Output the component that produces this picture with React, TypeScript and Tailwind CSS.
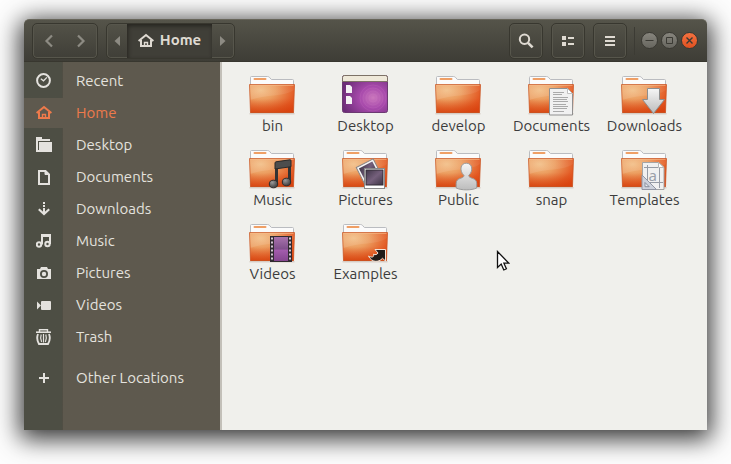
import type { ReactNode } from "react";

const FONT = "font-['Ubuntu','Noto_Sans',sans-serif]";

type SvgProps = { className?: string };

function HomeIcon({ className }: SvgProps) {
  return (
    <svg className={className} width="16" height="16" viewBox="0 0 16 16" fill="none" stroke="currentColor" strokeWidth="2">
      <path d="M.6 8 8 2l7.4 6" />
      <path d="M3 7v6h10V7" />
      <path d="M6.5 13V9.500h3V13" strokeWidth="1.4" />
    </svg>
  );
}

function RecentIcon() {
  return (
    <svg width="16" height="16" viewBox="0 0 16 16" fill="none" stroke="currentColor">
      <circle cx="7.5" cy="7.5" r="6.4" strokeWidth="2" />
      <path d="m4.8 5.8 2.7 2 3.4-3.4" strokeWidth="1.3" />
    </svg>
  );
}

function DesktopIcon() {
  return (
    <svg width="16" height="16" viewBox="0 0 16 16" fill="currentColor">
      <path d="M0 0h6v2h8v2H2v11H0z" />
      <path d="M3 5h13v10H3z" />
      <path d="M0 13h16v2H0z" />
    </svg>
  );
}

function DocumentIcon() {
  return (
    <svg width="16" height="16" viewBox="0 0 16 16" fill="none" stroke="currentColor" strokeWidth="2">
      <path d="M3 2h6.5L13 5.500V15H3z" />
      <path d="M9 1.500v4h4z" fill="currentColor" strokeWidth="1" />
    </svg>
  );
}

function DownloadIcon() {
  return (
    <svg width="16" height="16" viewBox="0 0 16 16" fill="currentColor">
      <path d="M7 1h2v2H7zM7 4h2v2H7zM7 7h2v5H7z" />
      <path d="m2.800 8.300 5.200 4.700 5.200-4.700" fill="none" stroke="currentColor" strokeWidth="2.200" />
    </svg>
  );
}

function MusicIcon() {
  return (
    <svg width="16" height="16" viewBox="0 0 16 16" fill="none" stroke="currentColor" strokeWidth="2">
      <circle cx="3" cy="11.500" r="2.200" />
      <circle cx="11.500" cy="11" r="2.200" />
      <path d="M6 11.500V2h8v9" />
      <path d="M6 3.500h8" strokeWidth="1" />
    </svg>
  );
}

function CameraIcon() {
  return (
    <svg width="16" height="16" viewBox="0 0 16 16" fill="currentColor">
      <path fillRule="evenodd" d="M1 4h3l1-2h6l1 2h3v10H1zM8 5a4 4 0 1 0 0 8 4 4 0 0 0 0-8z" />
      <circle cx="8" cy="9" r="2.200" />
    </svg>
  );
}

function VideoIcon() {
  return (
    <svg width="16" height="16" viewBox="0 0 16 16" fill="currentColor">
      <rect x="5" y="4" width="10" height="9" rx="1" />
      <path d="M1 4.500 5 8.500l-4 4z" />
    </svg>
  );
}

function TrashIcon() {
  return (
    <svg width="16" height="16" viewBox="0 0 16 16" fill="none" stroke="currentColor">
      <path d="M0 3.200h15" strokeWidth="1.600" />
      <path d="M3.500 3V.8h8V3" strokeWidth="1.400" />
      <path d="M2 5c-1.200 3-.8 7 1 10h9c1.800-3 2.200-7 1-10" strokeWidth="1.900" />
      <path d="M5.200 5.500c-1 2.800-.8 5 .4 7.500M9.800 5.500c1 2.800.8 5-.4 7.500M7.500 5v8.500" strokeWidth="1.200" />
    </svg>
  );
}

function PlusIcon() {
  return (
    <svg width="16" height="16" viewBox="0 0 16 16" fill="currentColor">
      <path d="M7 3h2v4h4v2H9v4H7V9H3V7h4z" />
    </svg>
  );
}

const places: { label: string; icon: ReactNode; active?: boolean }[] = [
  { label: "Recent", icon: <RecentIcon /> },
  { label: "Home", icon: <HomeIcon />, active: true },
  { label: "Desktop", icon: <DesktopIcon /> },
  { label: "Documents", icon: <DocumentIcon /> },
  { label: "Downloads", icon: <DownloadIcon /> },
  { label: "Music", icon: <MusicIcon /> },
  { label: "Pictures", icon: <CameraIcon /> },
  { label: "Videos", icon: <VideoIcon /> },
  { label: "Trash", icon: <TrashIcon /> },
];

function Place({ label, icon, active = false }: { label: string; icon: ReactNode; active?: boolean }) {
  return (
    <a
      href="#"
      aria-current={active ? "page" : undefined}
      className={`flex h-8 items-center text-[15px] ${active ? "text-[#ee7a4b]" : "text-[#e4e2de]"}`}
    >
      <span className={`flex h-[30px] w-[39px] items-center justify-center ${active ? "bg-[#5e594e]" : ""}`}>{icon}</span>
      <span className="pl-[13px]">{label}</span>
    </a>
  );
}

/* Shared gradients used by every file icon */
function Gradients() {
  return (
    <svg width="0" height="0" className="absolute" aria-hidden="true">
      <defs>
        <radialGradient id="front" cx="0.25" cy="0.2" r="0.95">
          <stop offset="0" stopColor="#f2bd84" />
          <stop offset="0.350" stopColor="#ec9e60" />
          <stop offset="0.800" stopColor="#e35a24" />
          <stop offset="1" stopColor="#df4614" />
        </radialGradient>
        <linearGradient id="shine" x1="0" y1="0" x2="1" y2="0">
          <stop offset="0" stopColor="#fff" stopOpacity="0.120" />
          <stop offset="1" stopColor="#fff" stopOpacity="0.060" />
        </linearGradient>
        <linearGradient id="shade" x1="0" y1="0" x2="0" y2="1">
          <stop offset="0.500" stopColor="#d94a12" stopOpacity="0" />
          <stop offset="1" stopColor="#d2410c" stopOpacity="0.600" />
        </linearGradient>
        <linearGradient id="silver" x1="0" y1="0" x2="0" y2="1">
          <stop offset="0" stopColor="#f6f6f6" />
          <stop offset="1" stopColor="#bcbcbc" />
        </linearGradient>
        <radialGradient id="purple" cx="0.680" cy="0.600" r="0.720">
          <stop offset="0" stopColor="#cb78bd" />
          <stop offset="0.400" stopColor="#a84aac" />
          <stop offset="1" stopColor="#6b2c77" />
        </radialGradient>
        <linearGradient id="film" x1="0" y1="0" x2="0" y2="1">
          <stop offset="0" stopColor="#a873ad" />
          <stop offset="0.500" stopColor="#80508c" />
          <stop offset="0.550" stopColor="#a35cad" />
          <stop offset="1" stopColor="#85468f" />
        </linearGradient>
        <radialGradient id="ball" cx="0.350" cy="0.300" r="0.800">
          <stop offset="0" stopColor="#9a9a9a" />
          <stop offset="1" stopColor="#333" />
        </radialGradient>
        <linearGradient id="photo" x1="0" y1="0" x2="1" y2="1">
          <stop offset="0" stopColor="#403648" />
          <stop offset="0.500" stopColor="#75607c" />
          <stop offset="1" stopColor="#3c3343" />
        </linearGradient>
      </defs>
    </svg>
  );
}

function Folder({ children }: { children?: ReactNode }) {
  return (
    <svg width="49" height="48" viewBox="0 0 49 48" aria-hidden="true">
      <path d="M1.500 41.800h45" stroke="#8d5f49" strokeOpacity="0.350" />
      <path d="M2.500 14V5.500q0-1 1-1h16q1.200 0 2 .9l1.900 2.100h21.100q1 0 1 1V14z" fill="#fbfbfb" stroke="#babcc0" />
      <rect x="5.500" y="6" width="13" height="2" rx="1" fill="#ef9f65" />
      <path d="M1.500 12.500h45v1.500l-1 27h-43L1.500 14z" fill="url(#front)" />
      <path d="M1.500 12.500h45v1.500l-1 27h-43L1.500 14z" fill="url(#shade)" />
      <path d="M2 13h44v5c-10 7-28 4-43.600 10z" fill="url(#shine)" />
      <path d="M1.500 12.500h45v1.500l-1 26.500h-43L1.500 14z" fill="none" stroke="#c85422" strokeOpacity="0.700" />
      <path d="M2.500 13.500h43" stroke="#f6bd8b" strokeOpacity="0.600" />
      {children}
    </svg>
  );
}

function DesktopTile() {
  return (
    <svg width="49" height="48" viewBox="0 0 49 48" aria-hidden="true">
      <rect x="1.500" y="3.500" width="45" height="37" rx="2" fill="url(#purple)" stroke="#6c3a72" />
      <g fill="none" stroke="#d287c9" strokeOpacity="0.180">
        <circle cx="32" cy="26" r="4" />
        <circle cx="32" cy="26" r="7" />
        <circle cx="32" cy="26" r="10" />
        <circle cx="32" cy="26" r="13" />
      </g>
      <path d="M1.500 9.500v-4q0-2 2-2h41q2 0 2 2v4z" fill="#efe9d9" stroke="#7d7266" />
      <path d="M5 13h4l2 2v6H5zM5 24h4l2 2v6H5z" fill="#f4f1f4" />
    </svg>
  );
}

const documentBadge = (
  <g>
    <path d="M22.500 16.500h18l5 5v21.500h-23z" fill="#f1f1f1" stroke="#8f8f8f" />
    <path d="M40.500 16.500v5h5z" fill="#fff" stroke="#b3b3b3" strokeWidth="0.800" />
    <path d="M26 20.500h11M26 22.500h9M26 25.500h15M26 27.500h14M26 29.500h15M26 32.500h13M26 34.500h15M26 36.500h14M26 39.500h11" stroke="#aaa" />
  </g>
);

const downloadBadge = (
  <path d="M27.500 16.500h12v11h5L33.500 41.500l-11-14h5z" fill="url(#silver)" stroke="#8e8e8e" />
);

const musicBadge = (
  <g>
    <path d="M28.500 38V18.500L41.500 16v20" fill="none" stroke="#333" strokeWidth="3" />
    <path d="M27 17q0-1 1-1.200l14-2q1-.1 1 .9v6L27 23z" fill="#4d4d4d" stroke="#292929" />
    <ellipse cx="25.500" cy="38" rx="4.200" ry="3.800" fill="url(#ball)" stroke="#2d2d2d" />
    <ellipse cx="38.500" cy="36" rx="4.200" ry="3.800" fill="url(#ball)" stroke="#2d2d2d" />
  </g>
);

const picturesBadge = (
  <g>
    <g transform="rotate(-27 26 25)">
      <rect x="18" y="17" width="19" height="19" fill="#f4f4f4" stroke="#8a8585" />
      <rect x="20" y="19" width="15" height="13" fill="url(#photo)" />
    </g>
    <rect x="23.500" y="22.500" width="20" height="20" fill="#fff" stroke="#898989" />
    <rect x="25" y="24" width="17" height="15" fill="url(#photo)" stroke="#332d36" />
  </g>
);

const publicBadge = (
  <path
    d="M30 29.500c-2.500-2.500-3.200-5-3-7.500.2-3 2.500-4.800 5.300-4.800s5.200 1.800 5.400 4.800c.2 2.500-.5 5-3 7.500 0 3.500 8 1.700 8 8V42c-5 2.500-15.500 2.500-20.500 0v-4.500c0-6.300 7.800-4.500 7.800-8z"
    fill="url(#silver)"
    stroke="#9c9c9c"
  />
);

const templatesBadge = (
  <g>
    <path d="M22.500 16.500h16l5.500 5v22h-21.500z" fill="#f0f0f0" stroke="#a4a4a4" />
    <path d="M38.500 16.500v5h5.500z" fill="#fff" stroke="#b8b8b8" />
    <path d="M27.500 19v21M39.500 22v20M24 21.500h14M30 36.500h13" stroke="#969ba5" />
    <text x="28.500" y="35" fontSize="15" fill="#9a9fa9" className="font-['Noto_Sans',sans-serif]">a</text>
    <path d="M22 29v14.500h14.500z" fill="#cdd1db" stroke="#9296a3" />
    <path d="M25 36.500v4.200h4.200z" fill="#eceef3" stroke="#888d9a" />
  </g>
);

const videosBadge = (
  <g>
    <rect x="22" y="16" width="22" height="26" fill="#302a31" />
    <rect x="26" y="17" width="14" height="24" fill="url(#film)" />
    <path d="M24 17.500v24M42 17.500v24" stroke="#d5c9d6" strokeWidth="2" strokeDasharray="2 2" />
  </g>
);

const linkBadge = (
  <path
    d="M34 29.500h10.500V41l-3-2.700c-4 4.500-11 4.200-14-2.300 3.500 2 6 1 5-1.800 2 .8 3.500.5 4.500-1.200z"
    fill="#211b18"
    stroke="#f3e2d5"
  />
);

const files: { label: string; icon: ReactNode }[] = [
  { label: "bin", icon: <Folder /> },
  { label: "Desktop", icon: <DesktopTile /> },
  { label: "develop", icon: <Folder /> },
  { label: "Documents", icon: <Folder>{documentBadge}</Folder> },
  { label: "Downloads", icon: <Folder>{downloadBadge}</Folder> },
  { label: "Music", icon: <Folder>{musicBadge}</Folder> },
  { label: "Pictures", icon: <Folder>{picturesBadge}</Folder> },
  { label: "Public", icon: <Folder>{publicBadge}</Folder> },
  { label: "snap", icon: <Folder /> },
  { label: "Templates", icon: <Folder>{templatesBadge}</Folder> },
  { label: "Videos", icon: <Folder>{videosBadge}</Folder> },
  { label: "Examples", icon: <Folder>{linkBadge}</Folder> },
];

const frame = "border border-[#38372f] shadow-[inset_0_0_0_1px_#57564c]";
const toolButton = `flex h-9 w-[34px] items-center justify-center rounded-[5px] text-[#dfdad2] ${frame}`;
const windowButton = "flex size-[17px] items-center justify-center rounded-full border border-[#3a3933] text-[#3b3a34]";

function HeaderBar() {
  return (
    <header className="flex h-[43px] shrink-0 items-center rounded-t-[5px] border-t border-b border-t-[#67655a] border-b-[#38372f] bg-linear-to-b from-[#55544a] to-[#3e3d36] pr-[9px] pl-2">
      <div className={`flex h-9 rounded-[5px] text-[#8d8b83] ${frame}`}>
        <button type="button" aria-label="Back" className="flex w-8 items-center justify-center">
          <svg width="16" height="16" viewBox="0 0 16 16" fill="none" stroke="currentColor" strokeWidth="2.200">
            <path d="M11 2.500 5.500 8l5.500 5.500" />
          </svg>
        </button>
        <button type="button" aria-label="Forward" className="flex w-8 items-center justify-center">
          <svg width="16" height="16" viewBox="0 0 16 16" fill="none" stroke="currentColor" strokeWidth="2.200">
            <path d="M5 2.500 10.500 8 5 13.500" />
          </svg>
        </button>
      </div>

      <div className={`ml-2 flex h-9 rounded-[5px] text-[#8d8b83] ${frame}`}>
        <button type="button" aria-label="Scroll path left" className="flex w-5 items-center justify-center">
          <svg width="6" height="10" viewBox="0 0 6 10" fill="currentColor">
            <path d="M6 0v10L.5 5z" />
          </svg>
        </button>
        <button
          type="button"
          className="flex w-[85px] items-center justify-center gap-[6px] bg-[#403f38] text-[15px] font-bold text-[#dfdad2] shadow-[inset_1px_2px_4px_#25241f]"
        >
          <HomeIcon />
          Home
        </button>
        <button type="button" aria-label="Scroll path right" className="flex w-[22px] items-center justify-center">
          <svg width="6" height="10" viewBox="0 0 6 10" fill="currentColor">
            <path d="M0 0v10l5.500-5z" />
          </svg>
        </button>
      </div>

      <div className="ml-auto flex gap-2">
        <button type="button" aria-label="Search" className={toolButton}>
          <svg width="16" height="16" viewBox="0 0 16 16" fill="none" stroke="currentColor">
            <circle cx="6.500" cy="6.200" r="4.700" strokeWidth="2" />
            <path d="m10 9.800 4.600 4.600" strokeWidth="2.600" />
          </svg>
        </button>
        <button type="button" aria-label="View options" className={toolButton}>
          <svg width="16" height="16" viewBox="0 0 16 16" fill="currentColor">
            <path d="M2 3h4v4H2zM2 9h4v4H2zM8 4h6v2H8zM8 10h6v2H8z" />
          </svg>
        </button>
        <button type="button" aria-label="Menu" className={toolButton}>
          <svg width="16" height="16" viewBox="0 0 16 16" fill="currentColor">
            <path d="M3 3h10v2H3zM3 7h10v2H3zM3 11h10v2H3z" />
          </svg>
        </button>
      </div>

      <div className="ml-[7px] flex h-7 items-center gap-[3px] border-l border-[#3c3b34] pl-[6px]">
        <button type="button" aria-label="Minimize" className={`bg-linear-to-b from-[#87857d] to-[#67665f] ${windowButton}`}>
          <svg width="9" height="9" viewBox="0 0 9 9" stroke="currentColor">
            <path d="M.5 4.500h8" />
          </svg>
        </button>
        <button type="button" aria-label="Maximize" className={`bg-linear-to-b from-[#87857d] to-[#67665f] ${windowButton}`}>
          <svg width="9" height="9" viewBox="0 0 9 9" fill="none" stroke="currentColor">
            <path d="M1.500 1.500h6v6h-6z" />
          </svg>
        </button>
        <button type="button" aria-label="Close" className={`bg-linear-to-b from-[#f4713f] to-[#e05120] ${windowButton}`}>
          <svg width="9" height="9" viewBox="0 0 9 9" stroke="currentColor" strokeWidth="1.400">
            <path d="m1.500 1.500 6 6M7.500 1.500l-6 6" />
          </svg>
        </button>
      </div>
    </header>
  );
}

function Sidebar() {
  return (
    <nav
      aria-label="Places"
      className="w-[198px] shrink-0 border-r-2 border-[#c3c0b9] bg-[#5e594e] bg-linear-to-r from-[#4d4e44] from-[38px] via-[#43433a] via-[38px] to-[#5e594e] to-[39px] pt-[3px]"
    >
      {places.map((place) => (
        <Place key={place.label} {...place} />
      ))}
      <div className="pt-[9px]">
        <Place label="Other Locations" icon={<PlusIcon />} />
      </div>
    </nav>
  );
}

export default function App() {
  return (
    <div className={`flex min-h-screen bg-[#fdfdfd] px-6 pt-[19px] pb-[34px] ${FONT}`}>
      <Gradients />
      <div className="flex min-w-0 flex-1 flex-col rounded-t-[5px] shadow-[0_5px_24px_4px_rgba(0,0,0,0.8)]">
        <HeaderBar />
        <div className="flex flex-1">
          <Sidebar />
          <main className="relative min-w-0 flex-1 bg-[#f0f0ec] pt-[10px] pl-1">
            <ul className="grid grid-cols-[repeat(auto-fill,93px)] auto-rows-[74px]">
              {files.map((file) => (
                <li key={file.label} className="flex flex-col items-center text-[15px] text-[#3c3c3c]">
                  {file.icon}
                  <span className="-mt-1 leading-5">{file.label}</span>
                </li>
              ))}
            </ul>
            <svg className="absolute top-[188px] left-[274px]" width="14" height="22" viewBox="0 0 14 22" aria-hidden="true">
              <path d="M1.500 1.500v16l3.700-3.400 2.600 5.900 2.600-1.200-2.500-5.600h5z" fill="#fff" stroke="#111" strokeWidth="1.300" />
            </svg>
          </main>
        </div>
      </div>
    </div>
  );
}
